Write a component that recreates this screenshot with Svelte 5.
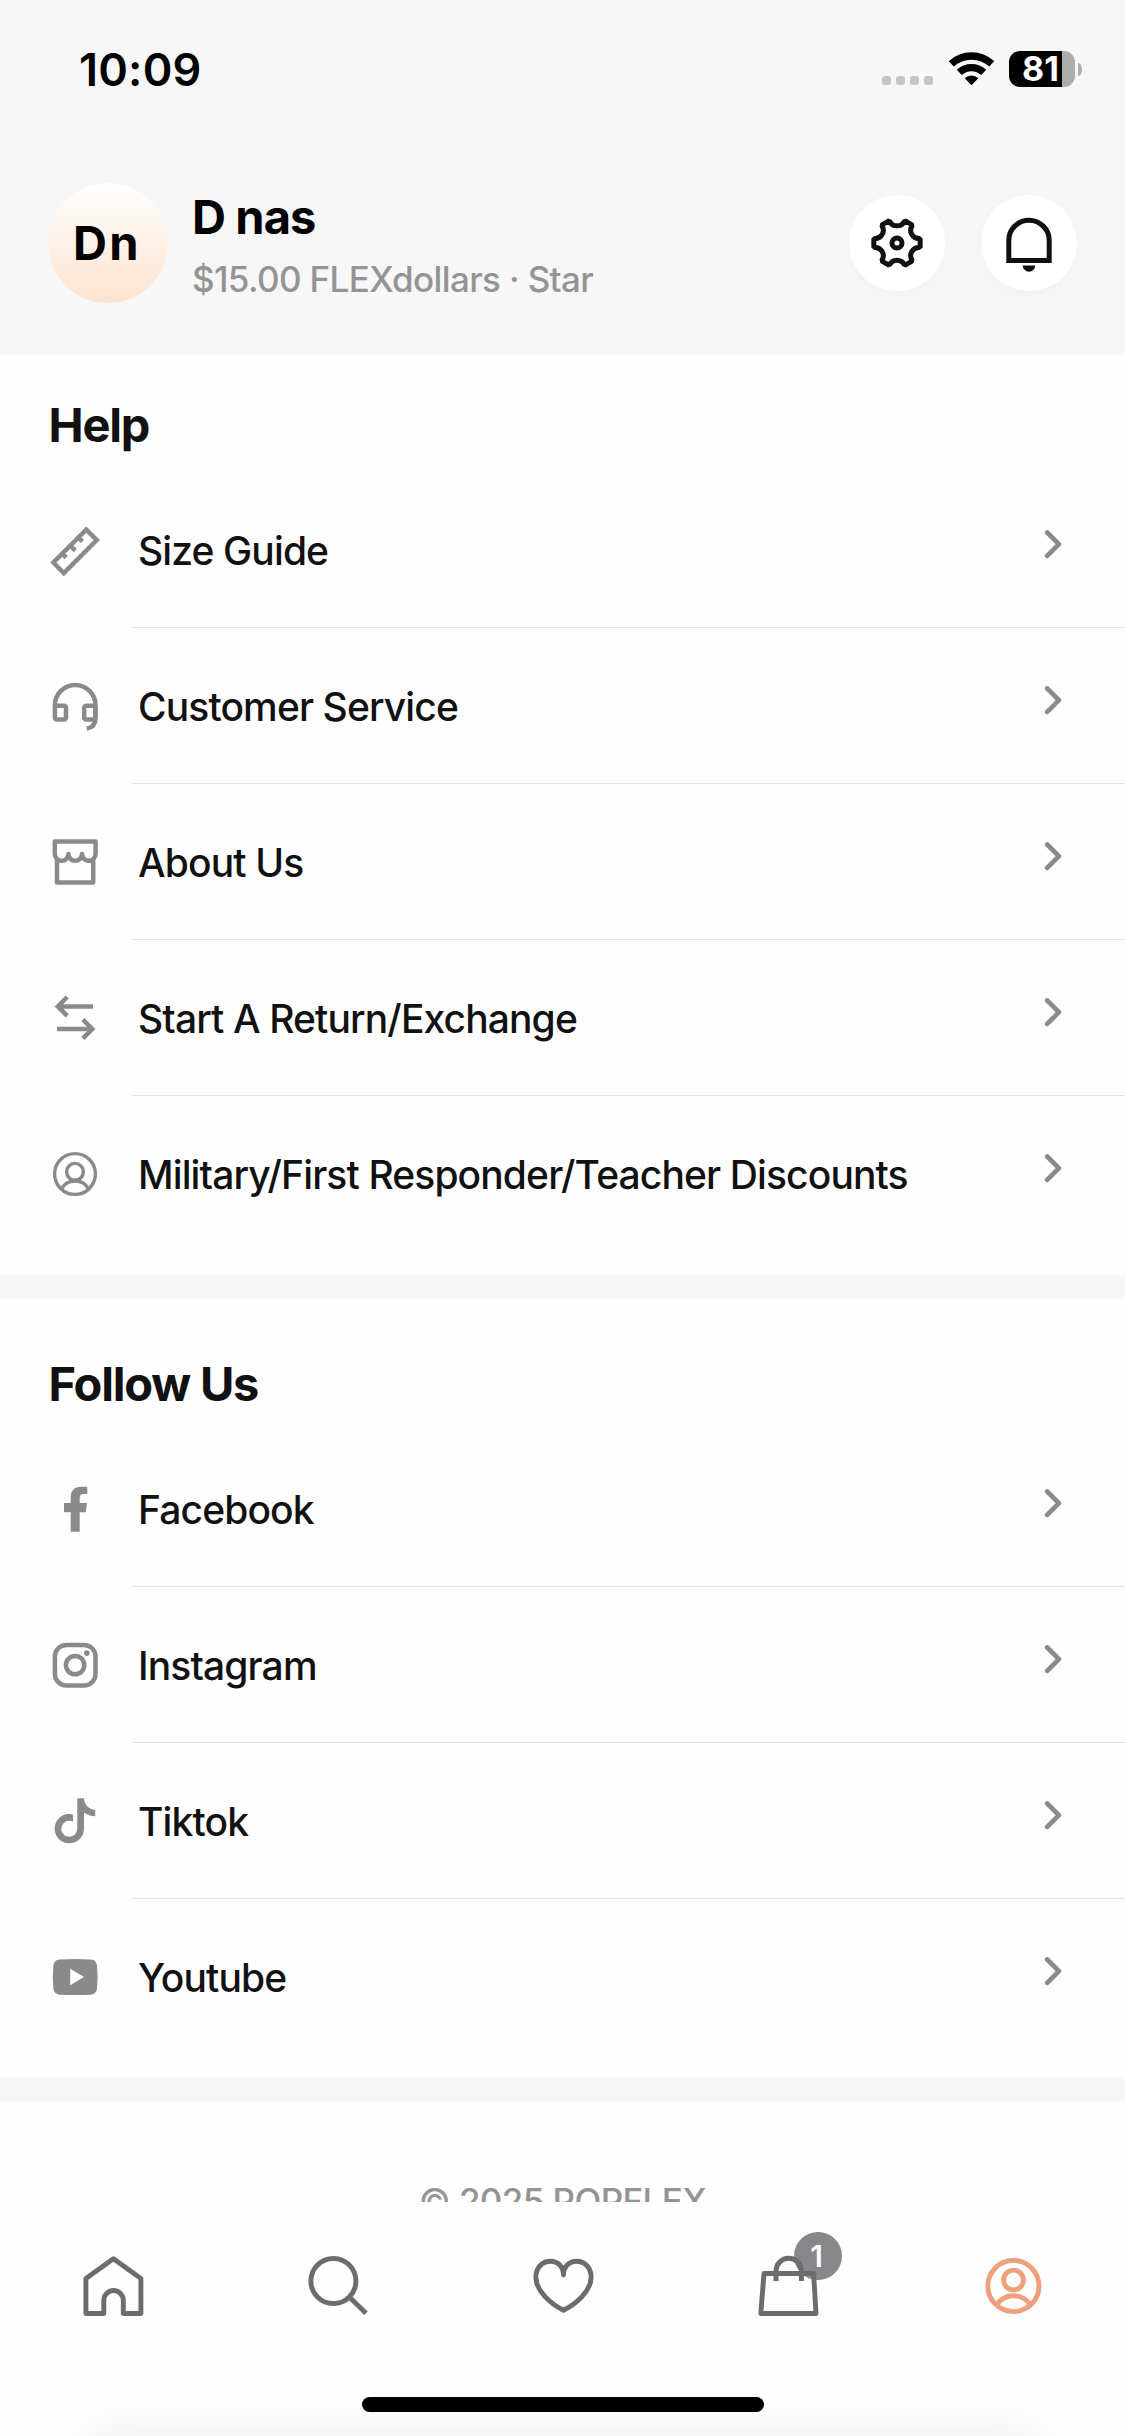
<script>
  const sections = [
    {
      title: 'Help',
      items: [
        { icon: 'ruler', label: 'Size Guide' },
        { icon: 'headset', label: 'Customer Service' },
        { icon: 'shop', label: 'About Us' },
        { icon: 'swap', label: 'Start A Return/Exchange' },
        { icon: 'person', label: 'Military/First Responder/Teacher Discounts' }
      ]
    },
    {
      title: 'Follow Us',
      items: [
        { icon: 'facebook', label: 'Facebook' },
        { icon: 'instagram', label: 'Instagram' },
        { icon: 'tiktok', label: 'Tiktok' },
        { icon: 'youtube', label: 'Youtube' }
      ]
    }
  ];

  const cartCount = 1;

  // Outline of a six-toothed gear centred in a 96-unit box.
  function gearPath() {
    const point = (deg) => {
      const a = (deg * Math.PI) / 180;
      return `${(48 + 23.6 * Math.cos(a)).toFixed(2)} ${(48 + 23.6 * Math.sin(a)).toFixed(2)}`;
    };
    let d = `M${point(-11)}`;
    for (let k = 0; k < 6; k++) {
      d += `L${point(k * 60 + 11)}A8.3 8.3 0 0 0 ${point(k * 60 + 49)}`;
    }
    return d + 'Z';
  }
  const gear = gearPath();
</script>

{#snippet rowIcon(name)}
  <svg class="row-icon" viewBox="0 0 60 60" aria-hidden="true">
    {#if name === 'ruler'}
      <path d="M41.3 9.6 51.8 20.1 18.8 53.1 8.4 42.5ZM17.2 33.7l4 4M25.2 25.7l5 5M33.4 17.5l4 4" />
    {:else if name === 'headset'}
      <path d="M9.9 32V29.3a20.3 20.3 0 0 1 40.6 0V42C50.5 48 47.5 51.6 41.7 52.6" />
      <rect x="9.9" y="29.7" width="11.1" height="13.8" rx="2" />
      <rect x="39.2" y="29.7" width="11.3" height="13.8" rx="2" />
    {:else if name === 'shop'}
      <path class="round" d="M9.8 9.5H50.6V22a6.8 6.8 0 0 1-13.6 0a6.8 6.8 0 0 1-13.6 0a6.8 6.8 0 0 1-13.6 0ZM12 28V50.6H48.2V28" />
    {:else if name === 'swap'}
      <path d="M48 18.4H13M22.2 9 12.8 18.4 22.2 27.8M12 41H47M37.9 31.6 47.3 41 37.9 50.4" />
    {:else if name === 'person'}
      <g class="thin">
        <circle cx="30" cy="30" r="20.4" />
        <circle cx="30" cy="27.8" r="8.4" />
        <path d="M16.2 45.4A15.6 15.6 0 0 1 43.8 45.4" />
      </g>
    {:else if name === 'facebook'}
      <path class="solid" d="M42.3 7.7V15H38.2C35.8 15 34.7 16.2 34.7 18.6V24H42L40.7 33.3H34.7V52.7H25.7V33.3H19V24H25.7V18C25.7 11.5 29.7 7.7 36 7.7Z" />
    {:else if name === 'instagram'}
      <rect x="9.9" y="9.9" width="40.6" height="40.6" rx="11.5" />
      <circle cx="30.1" cy="30.1" r="9.2" />
      <circle class="solid" cx="41.8" cy="18.1" r="2.8" />
    {:else if name === 'tiktok'}
      <path class="solid" d="M32.3 7.3H39C39 13 43.5 18.7 50.2 19V25.3C46 25.3 42 23.8 39 21.5V37.6A14.7 14.7 0 1 1 28 23.4V30.6A8 8 0 1 0 32.3 37.6Z" />
    {:else if name === 'youtube'}
      <path class="solid" fill-rule="evenodd" d="M14.5 12.4Q30 11.6 45.8 12.4Q51.4 13 52 18.5Q53.3 30 52 41.6Q51.4 47 45.8 47.7Q30 48.5 14.5 47.7Q9 47 8.4 41.6Q7.1 30 8.4 18.5Q9 13 14.5 12.4ZM25.2 21.8V38.2L39 30Z" />
    {/if}
  </svg>
{/snippet}

<div class="screen">
  <header>
    <div class="status">
      <span class="time">10:09</span>
      <div class="indicators">
        <span class="dots"><i></i><i></i><i></i><i></i></span>
        <svg class="wifi" viewBox="0 0 45 34" aria-hidden="true">
          <path d="M2.3 11.9A29.6 29.6 0 0 1 42.7 11.9M10.3 20.4A17.9 17.9 0 0 1 34.7 20.4" />
          <path class="wedge" d="M22.5 33.3 15.7 26.2A10 10 0 0 1 29.3 26.2Z" />
        </svg>
        <span class="battery">81</span>
        <span class="nub"></span>
      </div>
    </div>
    <div class="profile">
      <div class="avatar">Dn</div>
      <div class="who">
        <div class="name">D nas</div>
        <div class="points">$15.00 FLEXdollars · Star</div>
      </div>
      <button class="circle" aria-label="Settings">
        <svg viewBox="0 0 96 96"><path class="gear" d={gear} /><circle cx="48" cy="48" r="5" /></svg>
      </button>
      <button class="circle" aria-label="Notifications">
        <svg viewBox="0 0 96 96">
          <path d="M27.8 65.5V45.4a20.2 20.2 0 0 1 40.4 0V65.5Z" />
          <path class="clapper" d="M41.7 70.4H54.3A6.3 6.3 0 0 1 41.7 70.4Z" />
        </svg>
      </button>
    </div>
  </header>

  <main>
    {#each sections as section}
      <section>
        <h2>{section.title}</h2>
        {#each section.items as item}
          <div class="row">
            {@render rowIcon(item.icon)}
            <div class="row-body">
              <span class="label">{item.label}</span>
              <svg class="chevron" viewBox="0 0 20 40" aria-hidden="true"><path d="M3.2 2.5 14.9 14.2 3.2 25.9" /></svg>
            </div>
          </div>
        {/each}
      </section>
    {/each}
    <footer>© 2025 POPFLEX</footer>
  </main>

  <nav>
    <div class="tabs">
      <div class="tab">
        <svg viewBox="0 0 72 72"><path d="M36.4 8.7 63.9 28.4V63.5H46.3V50.3a9.75 9.75 0 0 0-19.5 0V63.5H8.9V28.4Z" /></svg>
      </div>
      <div class="tab">
        <svg viewBox="0 0 72 72"><circle cx="31.4" cy="31" r="22.5" /><path class="butt" d="M47.3 47 64 63.3" /></svg>
      </div>
      <div class="tab">
        <svg viewBox="0 0 72 72"><path d="M36.5 25V24.5C36.5 17 31 11.2 23.6 11.2C15 11.2 8.9 18 8.9 27.3C8.9 41 24 54 36.5 60.2C49 54 64.1 41 64.1 27.3C64.1 18 58 11.2 49.4 11.2C42 11.2 36.5 17 36.5 24.5" /></svg>
      </div>
      <div class="tab">
        <span class="badge">{cartCount}</span>
        <svg viewBox="0 0 72 72"><path d="M12 23.5H61.6L64 63.5H8.8Z" /><path class="butt" d="M24 31V21a12.7 12.7 0 0 1 25.4 0V31" /></svg>
      </div>
      <div class="tab active">
        <svg viewBox="0 0 72 72"><circle cx="36.4" cy="36" r="25.6" /><circle cx="36.5" cy="30" r="9.9" /><path class="butt" d="M20 54.6A19.8 19.8 0 0 1 53 54.6" /></svg>
      </div>
    </div>
    <div class="home-indicator"></div>
  </nav>
</div>

<style>
  :global(body) {
    margin: 0;
    background: #fefefe;
  }
  .screen {
    position: relative;
    display: flex;
    flex-direction: column;
    width: 1125px;
    height: 2436px;
    overflow: hidden;
    background: #fefefe;
    color: #111;
    font-family: Inter, 'Liberation Sans', sans-serif;
  }
  svg {
    display: block;
    flex: none;
    fill: none;
    stroke: currentColor;
  }

  header {
    flex: none;
    height: 354px;
    background: #f7f7f7;
    color: #000;
  }
  .status {
    display: flex;
    justify-content: space-between;
    align-items: center;
    height: 138px;
    padding: 0 43px 0 79px;
  }
  .time {
    font-size: 45px;
    font-weight: 600;
    letter-spacing: 0.2px;
  }
  .indicators {
    display: flex;
    align-items: center;
  }
  .dots {
    display: flex;
    gap: 5px;
    margin: 23px 16px 0 0;
  }
  .dots i {
    width: 9px;
    height: 9px;
    border-radius: 3px;
    background: #c5c5c5;
  }
  .wifi {
    width: 45px;
    height: 34px;
    margin-right: 15px;
    stroke-width: 7.4;
  }
  .wedge {
    fill: currentColor;
    stroke: none;
  }
  .battery {
    box-sizing: border-box;
    width: 66px;
    height: 36px;
    padding-left: 13px;
    border-radius: 11px;
    background: linear-gradient(to right, #000 53px, #adadad 53px);
    color: #fff;
    font-size: 34px;
    font-weight: 700;
    line-height: 36px;
  }
  .nub {
    width: 4px;
    height: 13px;
    margin-left: 3px;
    border-radius: 0 4px 4px 0 / 0 6px 6px 0;
    background: #adadad;
  }
  .profile {
    display: flex;
    align-items: center;
    height: 210px;
    padding: 0 48px;
  }
  .avatar {
    width: 120px;
    height: 120px;
    border-radius: 50%;
    background: linear-gradient(#fff, #fde3cf);
    font-size: 47px;
    font-weight: 700;
    line-height: 120px;
    letter-spacing: 2.4px;
    text-align: center;
    text-indent: -2px;
  }
  .who {
    flex: 1;
    padding: 10px 0 0 24px;
    line-height: 62px;
    white-space: nowrap;
  }
  .name {
    font-size: 47px;
    font-weight: 700;
    letter-spacing: -0.9px;
  }
  .points {
    color: #949494;
    font-size: 35px;
    font-weight: 500;
    letter-spacing: -0.64px;
  }
  .circle {
    width: 96px;
    height: 96px;
    padding: 0;
    border: 0;
    border-radius: 50%;
    background: #fff;
    color: #111;
    box-shadow: 0 6px 18px rgba(0, 0, 0, 0.025);
  }
  .circle + .circle {
    margin-left: 36px;
  }
  .circle svg {
    width: 96px;
    height: 96px;
    stroke-width: 5;
  }
  .gear {
    stroke-linejoin: bevel;
  }
  .clapper {
    fill: currentColor;
    stroke: none;
  }

  main {
    flex: 1;
    min-height: 0;
    overflow: hidden;
  }
  section {
    padding: 41px 0 23px;
    border-bottom: 24px solid #f7f7f7;
  }
  section + section {
    padding-top: 55px;
  }
  h2 {
    margin: 0 48px 17px 48.5px;
    font-size: 47px;
    font-weight: 700;
    line-height: 60px;
    letter-spacing: -1.2px;
  }
  .row {
    display: flex;
    align-items: center;
    height: 156px;
    padding-left: 45px;
  }
  .row-icon {
    width: 60px;
    height: 60px;
    margin-right: 27px;
    color: #8a8a8a;
    stroke-width: 4.5;
  }
  .row-icon .thin {
    stroke-width: 3.4;
  }
  .row-icon .round {
    stroke-linejoin: round;
  }
  .row-icon .solid {
    fill: currentColor;
    stroke: none;
  }
  .row-body {
    display: flex;
    flex: 1;
    justify-content: space-between;
    align-items: center;
    box-sizing: border-box;
    height: 156px;
    padding: 1px 61px 0 6px;
    border-bottom: 1px solid #e4e4e4;
  }
  .row:last-child .row-body {
    border-bottom-color: transparent;
  }
  .label {
    font-size: 39px;
    font-weight: 500;
    letter-spacing: -0.88px;
    white-space: nowrap;
  }
  .chevron {
    width: 20px;
    height: 40px;
    color: #8a8a8a;
    stroke-width: 4.7;
    stroke-linecap: round;
    stroke-linejoin: round;
  }
  footer {
    padding-top: 78px;
    color: #989393;
    font-size: 35px;
    font-weight: 500;
    line-height: 42px;
    letter-spacing: -0.6px;
    text-align: center;
  }

  nav {
    flex: none;
    height: 234px;
  }
  nav::after {
    content: '';
    position: absolute;
    top: 100%;
    left: 90px;
    right: 90px;
    height: 40px;
    box-shadow: 0 0 44px rgba(0, 0, 0, 0.07);
  }
  .tabs {
    display: grid;
    grid-template-columns: repeat(5, 1fr);
    justify-items: center;
    height: 195px;
    padding-top: 48px;
    box-sizing: border-box;
  }
  .tab {
    position: relative;
    width: 72px;
    height: 72px;
    color: #6b6c6e;
  }
  .tab svg {
    position: relative;
    width: 72px;
    height: 72px;
    stroke-width: 4.9;
    stroke-linejoin: round;
    stroke-linecap: round;
  }
  .tab .butt {
    stroke-linecap: butt;
  }
  .tab.active {
    color: #ee9f7b;
  }
  .badge {
    position: absolute;
    top: -18px;
    left: 42.5px;
    width: 48px;
    height: 48px;
    border-radius: 50%;
    background: #88888c;
    color: #fff;
    font-size: 30px;
    font-weight: 600;
    line-height: 48px;
    text-align: center;
    text-indent: -3px;
  }
  .home-indicator {
    width: 402px;
    height: 15px;
    margin: 0 auto;
    border-radius: 8px;
    background: #000;
  }
</style>
